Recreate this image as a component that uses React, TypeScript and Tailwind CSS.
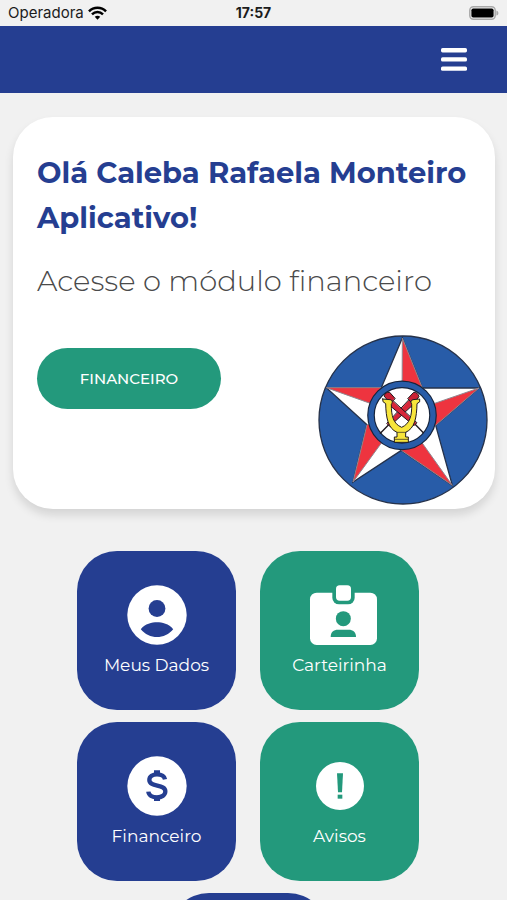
import React from 'react';

interface Module {
  label: string;
  color: string;
  icon: React.ReactNode;
}

const WifiIcon = () => (
  <svg width="19" height="14" viewBox="0 0 20 14" fill="none" stroke="#000" strokeWidth="2.6" aria-hidden="true">
    <path d="M1 5.2C6 .2 14 .2 19 5.2" />
    <path d="M4.2 8.4c3.3-3.2 8.3-3.2 11.6 0" />
    <path d="M10 14l-2.9-3c1.6-1.5 4.2-1.5 5.8 0z" fill="#000" stroke="none" />
  </svg>
);

const BatteryIcon = () => (
  <svg width="30" height="14" viewBox="0 0 30 14" aria-hidden="true">
    <rect x="0.8" y="0.8" width="25.4" height="12.4" rx="3.6" fill="#f1f1f1" stroke="#a9a9a9" strokeWidth="1.5" />
    <rect x="2.4" y="2.4" width="22.2" height="9.2" rx="1.8" fill="#000" />
    <path d="M27.4 4.4c2.6.8 2.6 4.4 0 5.2z" fill="#a9a9a9" />
  </svg>
);

const MenuIcon = () => (
  <svg width="26" height="23" viewBox="0 0 26 23" fill="#fff" aria-hidden="true">
    <rect y="0" width="26" height="4.4" rx="1.6" />
    <rect y="9.2" width="26" height="4.4" rx="1.6" />
    <rect y="18.4" width="26" height="4.4" rx="1.6" />
  </svg>
);

const AccountIcon = () => (
  <svg width="60" height="60" viewBox="0 0 60 60" aria-hidden="true">
    <circle cx="30" cy="30" r="29.7" fill="#fff" />
    <circle cx="30" cy="23.5" r="8.4" fill="#253e91" />
    <path d="M13.8 44.2C18 38.6 25 37.2 30 37.2s12 1.4 16.2 7C42.2 49.3 36 52 30 52s-12.2-2.7-16.2-7.8z" fill="#253e91" />
  </svg>
);

const BadgeIcon = () => (
  <svg width="75" height="60" viewBox="-24 0 225 180" aria-hidden="true">
    <rect y="23" width="201" height="157" rx="20" fill="#fff" />
    <path d="M67 20h67v18a20 20 0 0 1-20 20H87a20 20 0 0 1-20-20z" fill="#23997c" />
    <rect x="78" y="1" width="45" height="46" rx="11" fill="#fff" />
    <circle cx="100" cy="101" r="22.5" fill="#23997c" />
    <path d="M62 156c0-16 9-22 22-22h32c13 0 22 6 22 22z" fill="#23997c" />
  </svg>
);

const MoneyIcon = () => (
  <svg width="60" height="60" viewBox="0 0 180 180" fill="none" stroke="#253e91" aria-hidden="true">
    <circle cx="90" cy="90" r="89" fill="#fff" stroke="none" />
    <path d="M90 43v17M90 119v16" strokeWidth="18" />
    <path d="M114 70c-2-10-11-15-24-15s-23 6-23 17c0 23 48 11 48 34 0 12-11 18-25 18s-25-6-26-17" strokeWidth="13" />
  </svg>
);

const AlertIcon = () => (
  <svg width="48" height="48" viewBox="0 0 144 144" aria-hidden="true">
    <circle cx="72" cy="72" r="72" fill="#fff" />
    <path d="M63 34h18l-3 57H66z" fill="#23997c" />
    <rect x="65" y="98" width="14" height="12" fill="#23997c" />
  </svg>
);

const Emblem = () => (
  <svg className="w-[170px] shrink-0" viewBox="25 29 510 510" role="img" aria-label="Emblema">
    <circle cx="280" cy="284" r="252" fill="#285ca8" stroke="#26324a" strokeWidth="4" />
    <path
      d="M278 38l60 150h170L378 300l50 180-153-105-145 95 42-172L50 187h165z"
      fill="#fff"
      stroke="#26324a"
      strokeWidth="4"
    />
    <g fill="#ee343f" stroke="#8f8790" strokeWidth="3">
      <path d="M278 38l60 150-61 80z" />
      <path d="M508 188L378 300l-101-32z" />
      <path d="M428 480L275 375l2-107z" />
      <path d="M130 470l42-172 105-30z" />
      <path d="M50 187h165l62 81z" />
    </g>
    <circle cx="277" cy="270" r="93" fill="#fff" stroke="#16243c" strokeWidth="23" />
    <circle cx="277" cy="270" r="93" fill="none" stroke="#285ca8" strokeWidth="16" />
    <g stroke="#201a20" strokeWidth="4" strokeLinecap="round" strokeLinejoin="round">
      <path d="M212 324l28-29M341 322l-29-30" />
      <path d="M304 218l14 13-78 72-8-8z" fill="#d7263a" strokeWidth="3" />
      <path d="M242 220l-12 12 83 69 8-8z" fill="#d7263a" strokeWidth="3" />
      <path d="M295 219l17-18q12-1 16 13l-18 21z" fill="#c92034" strokeWidth="3" />
      <path d="M256 219l-16-18q-13-1-17 11l18 21z" fill="#c92034" strokeWidth="3" />
      <path
        d="M219 221l22 2c8 1 8 9 4 14 0 34 5 58 31 69 25-11 31-36 30-69-4-6-2-13 4-14l20-2q4 10-8 14c-1 43-7 74-34 86v14h8v16h-42v-16h8v-14c-27-12-33-43-34-86q-12-5-9-14z"
        fill="#f7e53b"
        strokeWidth="3"
      />
      <path d="M263 321h26M256 342h38" fill="none" strokeWidth="2" />
    </g>
  </svg>
);

const modules: Module[] = [
  { label: 'Meus Dados', color: 'bg-[#253e91]', icon: <AccountIcon /> },
  { label: 'Carteirinha', color: 'bg-[#23997c]', icon: <BadgeIcon /> },
  { label: 'Financeiro', color: 'bg-[#253e91]', icon: <MoneyIcon /> },
  { label: 'Avisos', color: 'bg-[#23997c]', icon: <AlertIcon /> },
];

const App: React.FC = () => {
  return (
    <div className="flex flex-col h-screen overflow-hidden bg-[#f1f1f1] font-['Montserrat','Inter',sans-serif]">
      <div className="grid grid-cols-3 items-center h-[26px] shrink-0 px-2 font-['Inter',sans-serif] text-[15px] text-[#1c1c1c]">
        <div className="flex items-center gap-1">
          <span>Operadora</span>
          <WifiIcon />
        </div>
        <span className="text-center text-sm font-bold">17:57</span>
        <div className="flex justify-end">
          <BatteryIcon />
        </div>
      </div>

      <header className="flex items-center justify-end h-[67px] shrink-0 px-10 bg-[#253e91]">
        <button type="button" aria-label="Menu">
          <MenuIcon />
        </button>
      </header>

      <main className="flex-1 overflow-hidden pt-6 pl-[13px] pr-3">
        <section className="pt-[33px] pb-1 pl-6 pr-[7px] bg-white rounded-[40px] shadow-[0_6px_10px_rgba(0,0,0,0.12)]">
          <h1 className="text-[29px] leading-[45px] font-bold text-[#253e91]">
            Olá Caleba Rafaela Monteiro Aplicativo!
          </h1>
          <p className="mt-[18px] text-[29px] leading-[45px] font-light text-[#4a4a4a]">Acesse o módulo financeiro</p>
          <div className="flex items-start justify-between mt-8">
            <button
              type="button"
              className="mt-[13px] pt-0.5 h-[61px] w-[184px] rounded-full bg-[#23997c] text-[15px] font-medium text-white"
            >
              FINANCEIRO
            </button>
            <Emblem />
          </div>
        </section>

        <div className="flex flex-wrap justify-center gap-x-6 gap-y-3 mt-[42px] pr-3">
          {modules.map((item) => (
            <button
              key={item.label}
              type="button"
              className={`flex flex-col items-center justify-center gap-2 size-[159px] rounded-[40px] text-white ${item.color}`}
            >
              <span className="flex items-center justify-center h-[60px]">{item.icon}</span>
              <span className="text-[17px] leading-6">{item.label}</span>
            </button>
          ))}
          <div className="size-[159px] rounded-[40px] bg-[#253e91]" />
        </div>
      </main>
    </div>
  );
};

export default App;
